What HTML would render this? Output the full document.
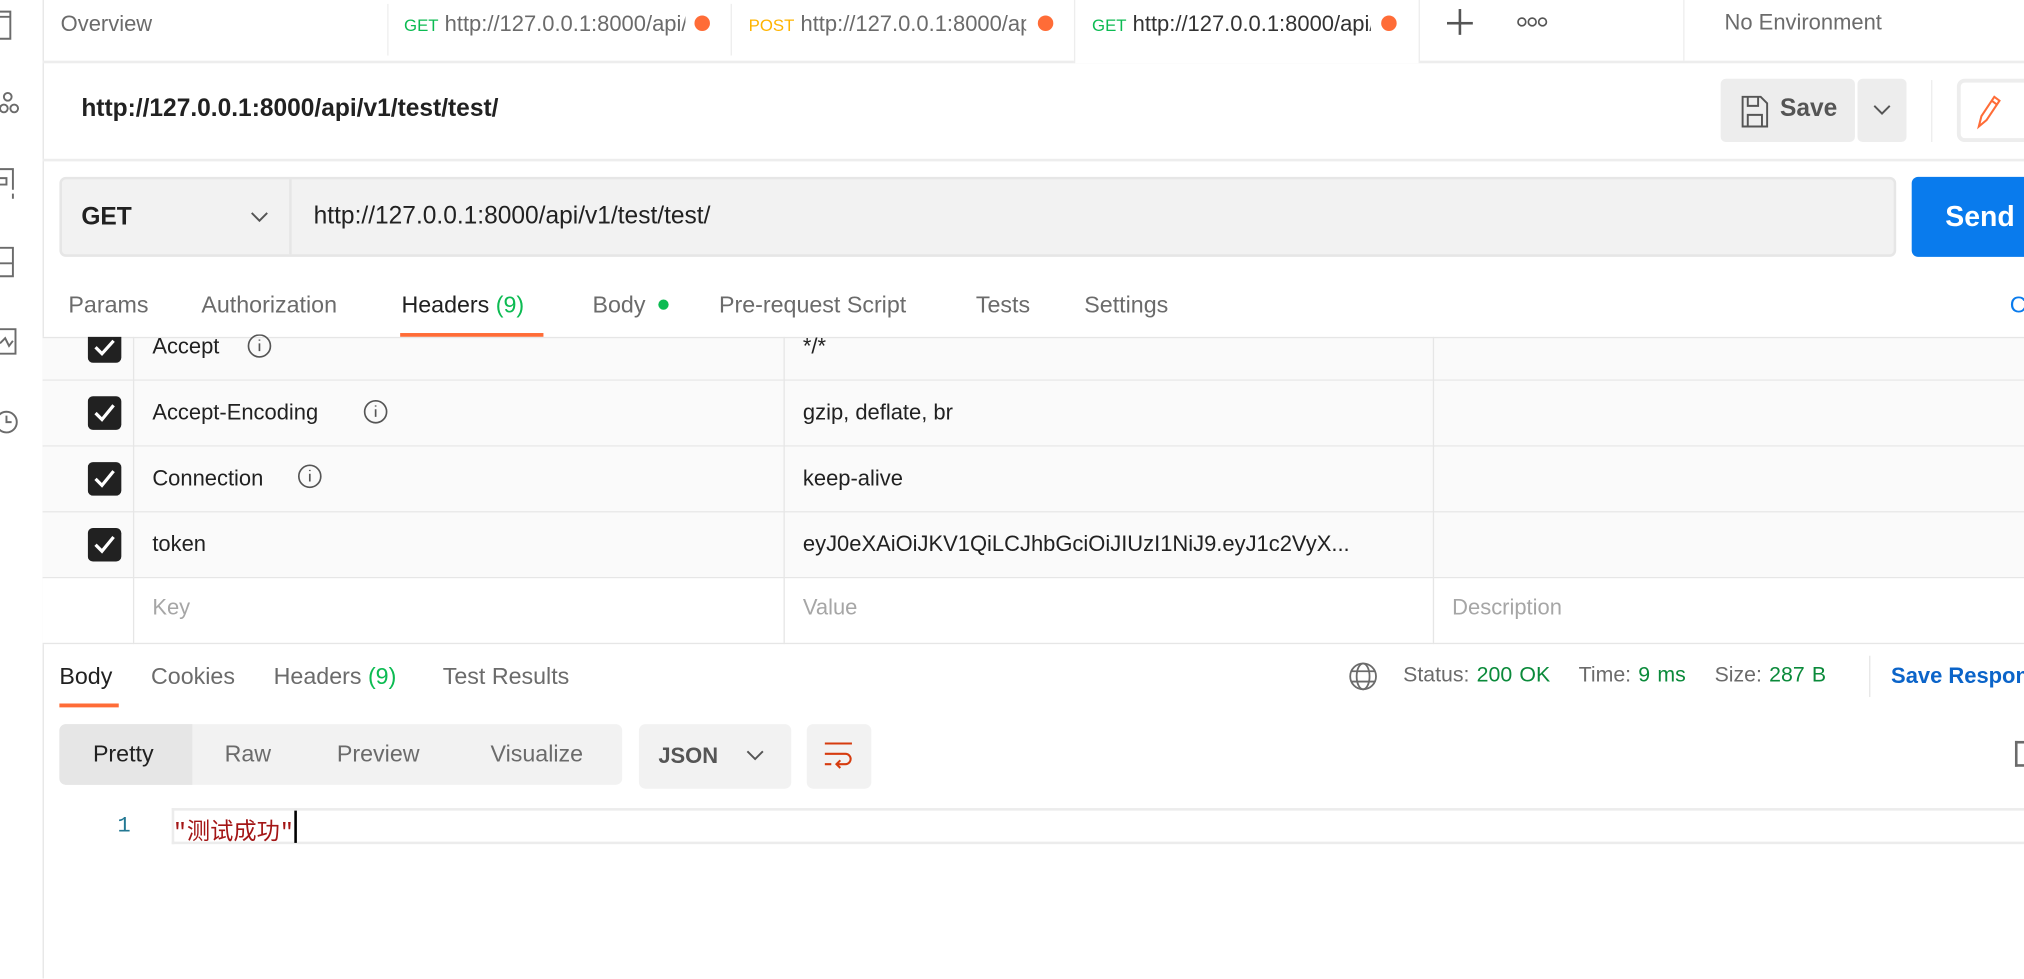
<!DOCTYPE html>
<html><head><meta charset="utf-8"><style>
*{box-sizing:border-box;margin:0;padding:0}
html,body{width:2024px;height:979px;overflow:hidden;background:#fff}
#w{position:absolute;left:0;top:0;width:1568px;height:758px;transform:scale(1.29082);transform-origin:0 0;font-family:"Liberation Sans","Noto Sans CJK SC",sans-serif;color:#212121}
.a{position:absolute}
.t{font-size:17px;white-space:nowrap}
.g{color:#6b6b6b}
.grn{color:#0cbb52}
.dot{width:12px;height:12px;border-radius:50%;background:#ff6c37}
.row{position:absolute;left:33px;width:1535px;height:51px;border-bottom:1px solid #e6e6e6;background:#fafafa}
</style></head><body><div id="w">
<div class="a" style="left:33px;top:0;width:1px;height:758px;background:#e6e6e6"></div>
<svg class="a" style="left:0;top:0" width="33" height="340" fill="none" stroke="#6b6b6b" stroke-width="1.5">
<path d="M0 9H8V30H0M0 13H8"/>
<circle cx="6" cy="75" r="3"/><circle cx="3" cy="84" r="3"/><circle cx="11" cy="84" r="3"/>
<path d="M0 131H10V147M0 138H5V143H0M10 150V154"/>
<path d="M0 192H10V214H0M0 204H10"/>
<path d="M0 255H12V274H0M0 266L4 262L7 268L10 264"/>
<circle cx="5" cy="327" r="8"/><path d="M5 322V327H9"/>
</svg>
<div class="a" style="left:33px;top:47px;width:1535px;height:2px;background:#ededed"></div>
<div class="a t g" style="left:47px;top:9px">Overview</div>
<div class="a" style="left:300px;top:3px;width:1px;height:40px;background:#ededed"></div>
<div class="a t" style="left:313px;top:9px;width:218px;overflow:hidden"><span class="grn" style="font-size:13px">GET</span> <span class="g">http://127.0.0.1:8000/api/v1</span></div>
<div class="a dot" style="left:538px;top:12px"></div>
<div class="a" style="left:566px;top:3px;width:1px;height:40px;background:#ededed"></div>
<div class="a t" style="left:580px;top:9px;width:215px;overflow:hidden"><span style="font-size:13px;color:#ffb400">POST</span> <span class="g">http://127.0.0.1:8000/api</span></div>
<div class="a dot" style="left:804px;top:12px"></div>
<div class="a" style="left:832px;top:0;width:268px;height:49px;background:#fff;border-left:1px solid #ededed;border-right:1px solid #ededed"></div>
<div class="a t" style="left:846px;top:9px;width:216px;overflow:hidden"><span class="grn" style="font-size:13px">GET</span> <span style="color:#333">http://127.0.0.1:8000/api/v1</span></div>
<div class="a dot" style="left:1070px;top:12px"></div>
<div class="a" style="left:1121px;top:17px;width:20px;height:1.5px;background:#555"></div>
<div class="a" style="left:1130px;top:7px;width:1.5px;height:20px;background:#555"></div>
<svg class="a" style="left:1175px;top:12px" width="24" height="10" fill="none" stroke="#555" stroke-width="1.3"><circle cx="4" cy="5" r="3"/><circle cx="12" cy="5" r="3"/><circle cx="20" cy="5" r="3"/></svg>
<div class="a" style="left:1304px;top:0;width:1px;height:47px;background:#ededed"></div>
<div class="a t g" style="left:1336px;top:8px">No Environment</div>
<div class="a" style="left:63px;top:74px;font-size:19px;font-weight:bold;color:#212121">http://127.0.0.1:8000/api/v1/test/test/</div>
<div class="a" style="left:1333px;top:61px;width:104px;height:49px;background:#ededed;border-radius:4px"></div>
<svg class="a" style="left:1349px;top:74px" width="24" height="25" fill="none" stroke="#555" stroke-width="1.5"><path d="M1 1H15L20 6V24H1Z M5 1V8H13V1 M5 24V15H16V24"/></svg>
<div class="a" style="left:1379px;top:74px;font-size:19px;font-weight:bold;color:#555">Save</div>
<div class="a" style="left:1439px;top:61px;width:38px;height:49px;background:#ededed;border-radius:4px"></div>
<svg class="a" style="left:1450px;top:80px" width="16" height="10" fill="none" stroke="#555" stroke-width="1.5"><path d="M2 2L8 8L14 2"/></svg>
<div class="a" style="left:1496px;top:62px;width:1px;height:48px;background:#ededed"></div>
<div class="a" style="left:1516px;top:61px;width:60px;height:49px;border:3px solid #ededed;border-radius:6px"></div>
<svg class="a" style="left:1530px;top:73px" width="26" height="28" fill="none" stroke="#ff6c37" stroke-width="1.6"><path d="M3 25L5 17L15 2L19 5L9 20Z M13 5L17 8"/></svg>
<div class="a" style="left:33px;top:123px;width:1535px;height:2px;background:#ededed"></div>
<div class="a" style="left:46px;top:137px;width:1423px;height:62px;background:#f2f2f2;border:2px solid #e6e6e6;border-radius:5px"></div>
<div class="a" style="left:224px;top:139px;width:2px;height:58px;background:#e6e6e6"></div>
<div class="a" style="left:63px;top:158px;font-size:19px;font-weight:bold">GET</div>
<svg class="a" style="left:193px;top:163px" width="16" height="10" fill="none" stroke="#555" stroke-width="1.5"><path d="M2 2L8 8L14 2"/></svg>
<div class="a" style="left:243px;top:157px;font-size:19px;color:#212121">http://127.0.0.1:8000/api/v1/test/test/</div>
<div class="a" style="left:1481px;top:137px;width:100px;height:62px;background:#097bed;border-radius:5px"></div>
<div class="a" style="left:1507px;top:155px;font-size:22px;font-weight:bold;color:#fff">Send</div>
<div class="a t g" style="left:53px;top:226px;font-size:18px">Params</div>
<div class="a t g" style="left:156px;top:226px;font-size:18px">Authorization</div>
<div class="a t" style="left:311px;top:226px;font-size:18px">Headers <span class="grn">(9)</span></div>
<div class="a" style="left:310px;top:258px;width:111px;height:3px;background:#ff6c37"></div>
<div class="a t g" style="left:459px;top:226px;font-size:18px">Body</div>
<div class="a" style="left:510px;top:232px;width:8px;height:8px;border-radius:50%;background:#0cbb52"></div>
<div class="a t g" style="left:557px;top:226px;font-size:18px">Pre-request Script</div>
<div class="a t g" style="left:756px;top:226px;font-size:18px">Tests</div>
<div class="a t g" style="left:840px;top:226px;font-size:18px">Settings</div>
<div class="a" style="left:1557px;top:226px;font-size:18px;color:#097bed">C</div>
<div class="row" style="top:261px;height:34px"></div>
<div class="row" style="top:295px"></div>
<div class="row" style="top:346px"></div>
<div class="row" style="top:397px"></div>
<div class="row" style="top:448px;background:#fff"></div>
<div class="a" style="left:103px;top:261px;width:1px;height:238px;background:#e6e6e6"></div>
<div class="a" style="left:607px;top:261px;width:1px;height:238px;background:#e6e6e6"></div>
<div class="a" style="left:1110px;top:261px;width:1px;height:238px;background:#e6e6e6"></div>
<div class="a" style="left:33px;top:261px;width:1535px;height:1px;background:#e6e6e6"></div>
<svg class="a" style="left:68px;top:261px" width="28" height="186">
<g fill="#212121"><rect x="0" y="-6" width="26" height="26" rx="4"/><rect x="0" y="46" width="26" height="26" rx="4"/><rect x="0" y="97" width="26" height="26" rx="4"/><rect x="0" y="148" width="26" height="26" rx="4"/></g>
<g fill="none" stroke="#fff" stroke-width="2.5"><path d="M6 8L11 13L20 3"/><path d="M6 59L11 64L20 53"/><path d="M6 110L11 115L20 104"/><path d="M6 161L11 166L20 155"/></g>
</svg>
<div class="a t" style="left:118px;top:259px">Accept</div>
<div class="a t" style="left:118px;top:310px">Accept-Encoding</div>
<div class="a t" style="left:118px;top:361px">Connection</div>
<div class="a t" style="left:118px;top:412px">token</div>
<svg class="a" style="left:190px;top:259px" width="120" height="120" fill="none" stroke="#555" stroke-width="1.3">
<circle cx="11" cy="9" r="8.5"/><path d="M11 7V13M11 4V5"/>
<circle cx="101" cy="60" r="8.5"/><path d="M101 58V64M101 55V56"/>
<circle cx="50" cy="110" r="8.5"/><path d="M50 108V114M50 105V106"/>
</svg>
<div class="a t" style="left:622px;top:259px">*/*</div>
<div class="a t" style="left:622px;top:310px">gzip, deflate, br</div>
<div class="a t" style="left:622px;top:361px">keep-alive</div>
<div class="a t" style="left:622px;top:412px">eyJ0eXAiOiJKV1QiLCJhbGciOiJIUzI1NiJ9.eyJ1c2VyX...</div>
<div class="a t" style="left:118px;top:461px;color:#a6a6a6">Key</div>
<div class="a t" style="left:622px;top:461px;color:#a6a6a6">Value</div>
<div class="a t" style="left:1125px;top:461px;color:#a6a6a6">Description</div>
<div class="a t" style="left:46px;top:514px;font-size:18px">Body</div>
<div class="a" style="left:46px;top:545px;width:46px;height:3px;background:#ff6c37"></div>
<div class="a t g" style="left:117px;top:514px;font-size:18px">Cookies</div>
<div class="a t g" style="left:212px;top:514px;font-size:18px">Headers <span class="grn">(9)</span></div>
<div class="a t g" style="left:343px;top:514px;font-size:18px">Test Results</div>
<svg class="a" style="left:1045px;top:513px" width="22" height="22" fill="none" stroke="#6b6b6b" stroke-width="1.4"><circle cx="11" cy="11" r="10"/><ellipse cx="11" cy="11" rx="5" ry="10"/><path d="M2 7H20M2 15H20"/></svg>
<div class="a t g" style="left:1087px;top:514px;font-size:16.5px;word-spacing:1px">Status: <span style="color:#0a8a3a">200 OK</span>&nbsp;&nbsp;&nbsp; Time: <span style="color:#0a8a3a">9 ms</span>&nbsp;&nbsp;&nbsp; Size: <span style="color:#0a8a3a">287 B</span></div>
<div class="a" style="left:1448px;top:508px;width:1px;height:32px;background:#e6e6e6"></div>
<div class="a" style="left:1465px;top:514px;font-size:17px;font-weight:bold;color:#0b64c9;white-space:nowrap">Save Response</div>
<div class="a" style="left:46px;top:561px;width:436px;height:47px;background:#f2f2f2;border-radius:5px"></div>
<div class="a" style="left:46px;top:561px;width:103px;height:47px;background:#e6e6e6;border-radius:5px 0 0 5px"></div>
<div class="a t" style="left:72px;top:574px;font-size:18px">Pretty</div>
<div class="a t g" style="left:174px;top:574px;font-size:18px">Raw</div>
<div class="a t g" style="left:261px;top:574px;font-size:18px">Preview</div>
<div class="a t g" style="left:380px;top:574px;font-size:18px">Visualize</div>
<div class="a" style="left:495px;top:561px;width:118px;height:50px;background:#f2f2f2;border-radius:5px"></div>
<div class="a" style="left:510px;top:576px;font-size:17px;font-weight:bold;color:#555">JSON</div>
<svg class="a" style="left:577px;top:580px" width="16" height="10" fill="none" stroke="#555" stroke-width="1.5"><path d="M2 2L8 8L14 2"/></svg>
<div class="a" style="left:625px;top:561px;width:50px;height:50px;background:#f2f2f2;border-radius:5px"></div>
<svg class="a" style="left:638px;top:574px" width="26" height="24" fill="none" stroke="#d63c0f" stroke-width="1.6"><path d="M1 2H22M1 10H17A4 4 0 0 1 17 18H10M13 15L10 18L13 21M1 18H6"/></svg>
<div class="a" style="left:1561px;top:574px;width:7px;height:20px;border:2px solid #6b6b6b;border-right:none"></div>
<div class="a" style="left:133px;top:626px;width:1435px;height:28px;border:2px solid #ececec;border-right:none"></div>
<div class="a" style="left:91px;top:631px;font-size:17px;color:#237893;font-family:'Liberation Mono',monospace">1</div>
<div class="a" style="left:134px;top:630px;font-size:18px;color:#a31515;font-family:'Liberation Mono','Noto Sans CJK SC',monospace;white-space:nowrap">"测试成功"</div>
<div class="a" style="left:228px;top:628px;width:2px;height:25px;background:#000"></div>
</div></body></html>
